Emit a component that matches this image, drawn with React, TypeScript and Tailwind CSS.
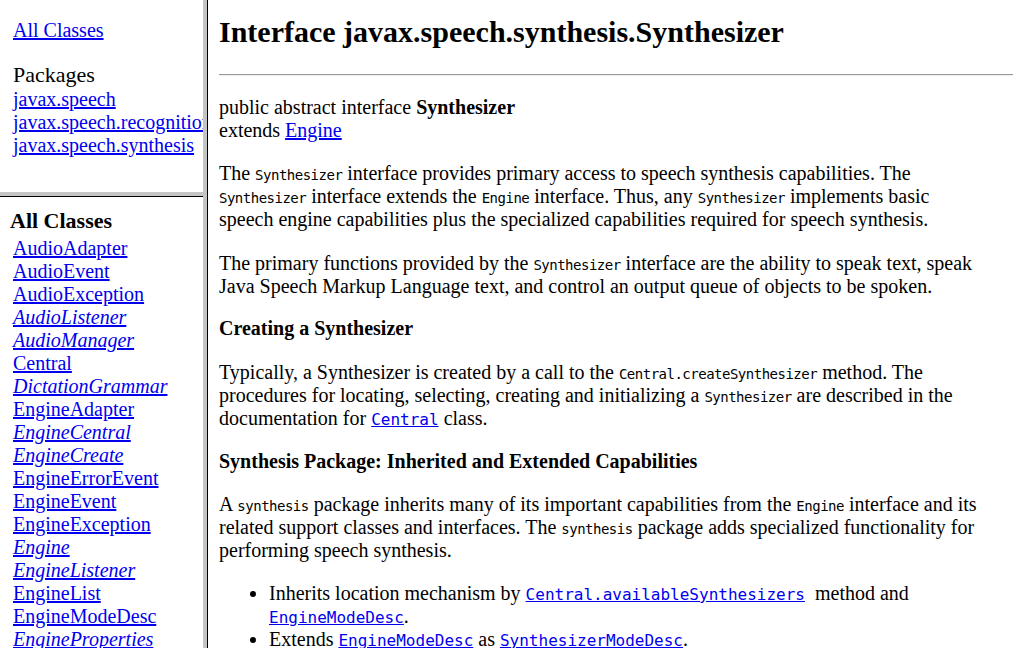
import React from 'react';

// javadoc frame page: packages + all classes on the left, class doc on the right
const serif = "font-['Liberation_Serif','Times_New_Roman',serif]";

const klassen: { naam: string; iface?: boolean }[] = [
  { naam: 'AudioAdapter' },
  { naam: 'AudioEvent' },
  { naam: 'AudioException' },
  { naam: 'AudioListener', iface: true },
  { naam: 'AudioManager', iface: true },
  { naam: 'Central' },
  { naam: 'DictationGrammar', iface: true },
  { naam: 'EngineAdapter' },
  { naam: 'EngineCentral', iface: true },
  { naam: 'EngineCreate', iface: true },
  { naam: 'EngineErrorEvent' },
  { naam: 'EngineEvent' },
  { naam: 'EngineException' },
  { naam: 'Engine', iface: true },
  { naam: 'EngineListener', iface: true },
  { naam: 'EngineList' },
  { naam: 'EngineModeDesc' },
  { naam: 'EngineProperties', iface: true },
  { naam: 'EngineStateError' },
  { naam: 'Grammar', iface: true },
];

function Code({ children }: { children: React.ReactNode }) {
  return (
    <code className="font-['DejaVu_Sans_Mono',monospace] text-[14px] leading-none tracking-[-0.5px]">
      {children}
    </code>
  );
}

// code inside links is rendered a size bigger in the original
function CodeLink({ children }: { children: React.ReactNode }) {
  return (
    <a href="#" className="font-['DejaVu_Sans_Mono',monospace] text-[16px] leading-none text-[#0000ee] underline">
      {children}
    </a>
  );
}

function Link({ children, className = '' }: { children: React.ReactNode; className?: string }) {
  return (
    <a href="#" className={`text-[#0000ee] underline ${className}`}>
      {children}
    </a>
  );
}

export default function App() {
  return (
    <div className={`flex h-[648px] w-[1024px] overflow-hidden bg-white text-[20px] leading-[23px] text-black ${serif}`}>
      {/* linker kolom */}
      <div className="flex w-[203px] shrink-0 flex-col">
        <div className="h-[192px] overflow-hidden whitespace-nowrap pl-[13px] pt-[19px]">
          <Link>All Classes</Link>
          <div className="mt-[20px] text-[22px] leading-[26px]">Packages</div>
          <div className="flex flex-col">
            <Link className="self-start">javax.speech</Link>
            <Link className="self-start">javax.speech.recognition</Link>
            <Link className="self-start">javax.speech.synthesis</Link>
          </div>
        </div>
        <div className="h-[5px] shrink-0 border-b border-black bg-[#c4c4c4]" />
        <div className="flex-1 overflow-hidden whitespace-nowrap pl-[10px] pt-[11px]">
          <div className="text-[22px] font-bold leading-[26px]">All Classes</div>
          <div className="mt-[3px] flex flex-col pl-[3px]">
            {klassen.map((k) => (
              <Link key={k.naam} className={`self-start ${k.iface ? 'italic' : ''}`}>
                {k.naam}
              </Link>
            ))}
          </div>
        </div>
      </div>
      <div className="w-[5px] shrink-0 border-r border-black bg-[#c4c4c4]" />

      {/* inhoud */}
      <div className="flex-1 overflow-hidden whitespace-nowrap px-[11px] pt-[14px]">
        <h2 className="text-[30px] font-bold leading-[35px]">Interface javax.speech.synthesis.Synthesizer</h2>
        <div className="mt-[25px] h-[2px] border-t border-[#9a9a9a] bg-[#eeeeee]" />
        <div className="mt-[20px]">
          public abstract interface <b>Synthesizer</b>
          <br />
          extends <Link>Engine</Link>
        </div>
        <p className="mt-[20px]">
          The <Code>Synthesizer</Code> interface provides primary access to speech synthesis capabilities. The
          <br />
          <Code>Synthesizer</Code> interface extends the <Code>Engine</Code> interface. Thus, any{' '}
          <Code>Synthesizer</Code> implements basic
          <br />
          speech engine capabilities plus the specialized capabilities required for speech synthesis.
        </p>
        <p className="mt-[21px]">
          The primary functions provided by the <Code>Synthesizer</Code> interface are the ability to speak text, speak
          <br />
          Java Speech Markup Language text, and control an output queue of objects to be spoken.
        </p>
        <p className="mt-[19px] font-bold">Creating a Synthesizer</p>
        <p className="mt-[21px]">
          Typically, a Synthesizer is created by a call to the <Code>Central.createSynthesizer</Code> method. The
          <br />
          procedures for locating, selecting, creating and initializing a <Code>Synthesizer</Code> are described in the
          <br />
          documentation for <CodeLink>Central</CodeLink> class.
        </p>
        <p className="mt-[20px] font-bold">Synthesis Package: Inherited and Extended Capabilities</p>
        <p className="mt-[20px]">
          A <Code>synthesis</Code> package inherits many of its important capabilities from the <Code>Engine</Code>{' '}
          interface and its
          <br />
          related support classes and interfaces. The <Code>synthesis</Code> package adds specialized functionality for
          <br />
          performing speech synthesis.
        </p>
        <ul className="mt-[20px] list-disc pl-[50px]">
          <li>
            Inherits location mechanism by <CodeLink>Central.availableSynthesizers</CodeLink>
            &nbsp; method and
            <br />
            <CodeLink>EngineModeDesc</CodeLink>.
          </li>
          <li>
            Extends <CodeLink>EngineModeDesc</CodeLink> as <CodeLink>SynthesizerModeDesc</CodeLink>.
          </li>
        </ul>
      </div>
    </div>
  );
}
